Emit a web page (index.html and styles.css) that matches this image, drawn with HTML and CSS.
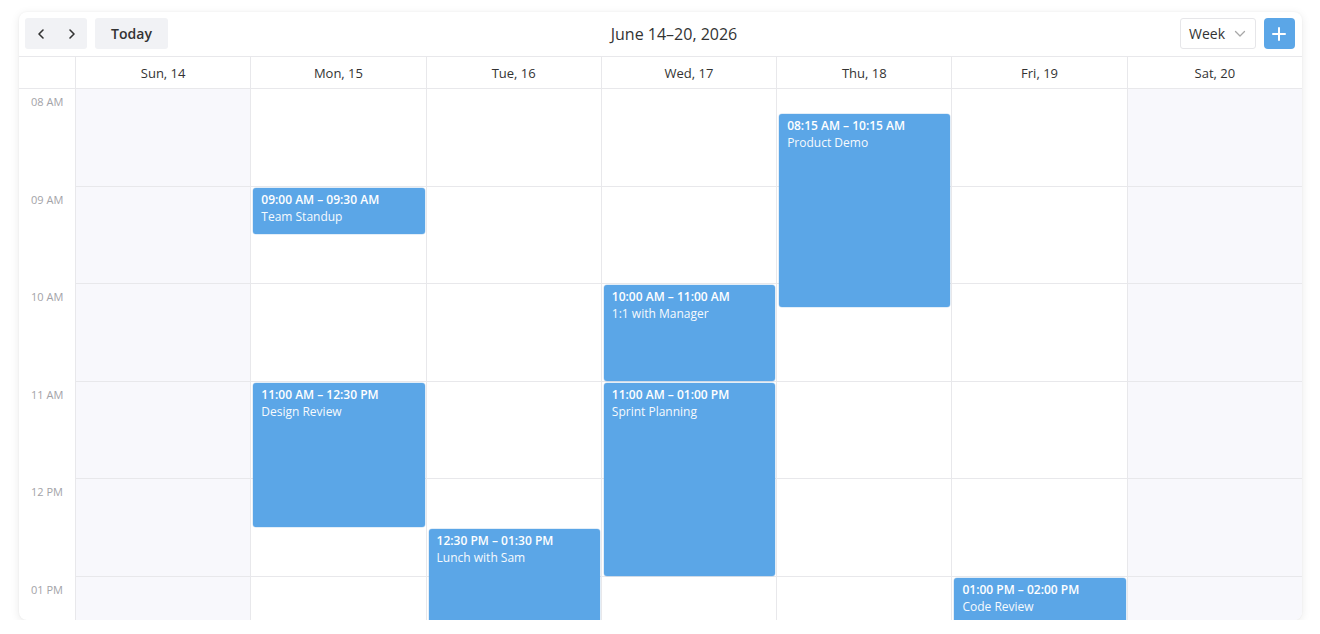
FILE: index.html
```html
<!DOCTYPE html>
<html>
<head>
<meta charset="utf-8">
<link rel="stylesheet" href="styles.css">
</head>
<body>
<div class="cal">
  <div class="toolbar">
    <div class="tb-left">
      <div class="nav">
        <button class="navbtn" aria-label="Previous"><svg width="10" height="12" viewBox="0 0 10 12"><polyline points="7,2 3,6 7,10" fill="none" stroke="#333" stroke-width="1.6" stroke-linecap="round" stroke-linejoin="round"/></svg></button>
        <button class="navbtn" aria-label="Next"><svg width="10" height="12" viewBox="0 0 10 12"><polyline points="3,2 7,6 3,10" fill="none" stroke="#333" stroke-width="1.6" stroke-linecap="round" stroke-linejoin="round"/></svg></button>
      </div>
      <button class="today">Today</button>
    </div>
    <div class="title">June 14–20, 2026</div>
    <div class="tb-right">
      <div class="select"><span>Week</span><svg width="12" height="8" viewBox="0 0 12 8"><polyline points="1.5,1.5 6,6 10.5,1.5" fill="none" stroke="#a8a8a8" stroke-width="1.3" stroke-linecap="round" stroke-linejoin="round"/></svg></div>
      <button class="add" aria-label="Add"><svg width="14" height="14" viewBox="0 0 14 14"><path d="M7 1v12M1 7h12" stroke="#fff" stroke-width="2" stroke-linecap="round"/></svg></button>
    </div>
  </div>
  <div class="grid head">
    <div class="corner"></div>
    <div class="dh">Sun, 14</div>
    <div class="dh">Mon, 15</div>
    <div class="dh">Tue, 16</div>
    <div class="dh">Wed, 17</div>
    <div class="dh">Thu, 18</div>
    <div class="dh">Fri, 19</div>
    <div class="dh">Sat, 20</div>
  </div>
  <div class="grid body">
    <div class="times">
      <div class="tl">08 AM</div>
      <div class="tl">09 AM</div>
      <div class="tl">10 AM</div>
      <div class="tl">11 AM</div>
      <div class="tl">12 PM</div>
      <div class="tl">01 PM</div>
    </div>
    <div class="day weekend">
      <div class="slot"></div><div class="slot"></div><div class="slot"></div><div class="slot"></div><div class="slot"></div><div class="slot"></div>
    </div>
    <div class="day">
      <div class="slot"></div><div class="slot"></div><div class="slot"></div><div class="slot"></div><div class="slot"></div><div class="slot"></div>
      <div class="ev" style="top:98.5px;height:46.75px"><div class="et">09:00 AM – 09:30 AM</div><div class="en">Team Standup</div></div>
      <div class="ev" style="top:293.5px;height:144.25px"><div class="et">11:00 AM – 12:30 PM</div><div class="en">Design Review</div></div>
    </div>
    <div class="day">
      <div class="slot"></div><div class="slot"></div><div class="slot"></div><div class="slot"></div><div class="slot"></div><div class="slot"></div>
      <div class="ev" style="top:440.25px;height:95.5px"><div class="et">12:30 PM – 01:30 PM</div><div class="en">Lunch with Sam</div></div>
    </div>
    <div class="day">
      <div class="slot"></div><div class="slot"></div><div class="slot"></div><div class="slot"></div><div class="slot"></div><div class="slot"></div>
      <div class="ev" style="top:196px;height:95.5px"><div class="et">10:00 AM – 11:00 AM</div><div class="en">1:1 with Manager</div></div>
      <div class="ev" style="top:293.5px;height:193px"><div class="et">11:00 AM – 01:00 PM</div><div class="en">Sprint Planning</div></div>
    </div>
    <div class="day">
      <div class="slot"></div><div class="slot"></div><div class="slot"></div><div class="slot"></div><div class="slot"></div><div class="slot"></div>
      <div class="ev" style="top:25.375px;height:193px"><div class="et">08:15 AM – 10:15 AM</div><div class="en">Product Demo</div></div>
    </div>
    <div class="day">
      <div class="slot"></div><div class="slot"></div><div class="slot"></div><div class="slot"></div><div class="slot"></div><div class="slot"></div>
      <div class="ev" style="top:488.5px;height:95.5px"><div class="et">01:00 PM – 02:00 PM</div><div class="en">Code Review</div></div>
    </div>
    <div class="day weekend">
      <div class="slot"></div><div class="slot"></div><div class="slot"></div><div class="slot"></div><div class="slot"></div><div class="slot"></div>
    </div>
  </div>
</div>
</body>
</html>
```

FILE: styles.css
```css
* { box-sizing: border-box; }
html, body { margin: 0; padding: 0; background: #fff; }
body {
  font-family: "Open Sans", "Noto Sans", sans-serif;
  color: #333;
  padding: 12px 18px 0 19px;
}
button { font-family: inherit; border: 0; margin: 0; cursor: pointer; }
.cal {
  height: 608px;
  background: #fff;
  border-radius: 8px;
  box-shadow: 0 2px 10px rgba(0, 0, 0, 0.09), 0 0 2px rgba(0, 0, 0, 0.05);
  overflow: hidden;
  display: flex;
  flex-direction: column;
}
.toolbar {
  display: flex;
  align-items: center;
  justify-content: space-between;
  padding: 6px 7px 7px 6px;
  border-bottom: 1px solid #e8e8eb;
  flex: none;
}
.tb-left, .tb-right { display: flex; align-items: center; gap: 8px; }
.nav {
  display: flex;
  background: #f1f2f5;
  border-radius: 3px;
  height: 31px;
  width: 62px;
}
.navbtn {
  background: transparent;
  width: 31px;
  height: 31px;
  display: flex;
  align-items: center;
  justify-content: center;
  padding: 0;
}
.today {
  background: #f1f2f5;
  border-radius: 3px;
  height: 31px;
  width: 73px;
  font-size: 14px;
  font-weight: 600;
  color: #333;
  padding: 0;
}
.title { font-size: 16px; color: #333; }
.select {
  width: 76px;
  height: 31px;
  border: 1px solid #e6e6e9;
  border-radius: 3px;
  display: flex;
  align-items: center;
  justify-content: space-between;
  padding: 0 9px 0 8px;
  font-size: 14px;
  color: #333;
}
.select svg { margin-top: 1px; }
.add {
  width: 31px;
  height: 31px;
  background: #5ba6e7;
  border-radius: 4px;
  display: flex;
  align-items: center;
  justify-content: center;
  padding: 0;
}
.grid {
  display: grid;
  grid-template-columns: 56px repeat(7, 1fr);
}
.head {
  height: 32px;
  border-bottom: 1px solid #e8e8eb;
  flex: none;
}
.dh {
  border-left: 1px solid #e8e8eb;
  display: flex;
  align-items: center;
  justify-content: center;
  font-size: 13px;
  color: #333;
}
.body { flex: 1; min-height: 0; overflow: hidden; align-items: start; }
.tl {
  height: 97.5px;
  padding: 5px 0 0 12px;
  font-size: 11px;
  color: #a3a3a8;
}
.day {
  position: relative;
  border-left: 1px solid #e8e8eb;
}
.weekend { background: #f8f8fc; }
.slot {
  height: 97.5px;
  border-bottom: 1px solid #e8e8eb;
}
.ev {
  position: absolute;
  left: 2px;
  right: 1px;
  background: #5ba6e7;
  border-radius: 3px;
  color: #fff;
  padding: 3px 8px;
  font-size: 12px;
  line-height: 17px;
  overflow: hidden;
  box-shadow: 0 0 0 0.5px rgba(70, 140, 210, 0.3);
}
.et { font-weight: 600; }
.en { opacity: 0.95; }
```
